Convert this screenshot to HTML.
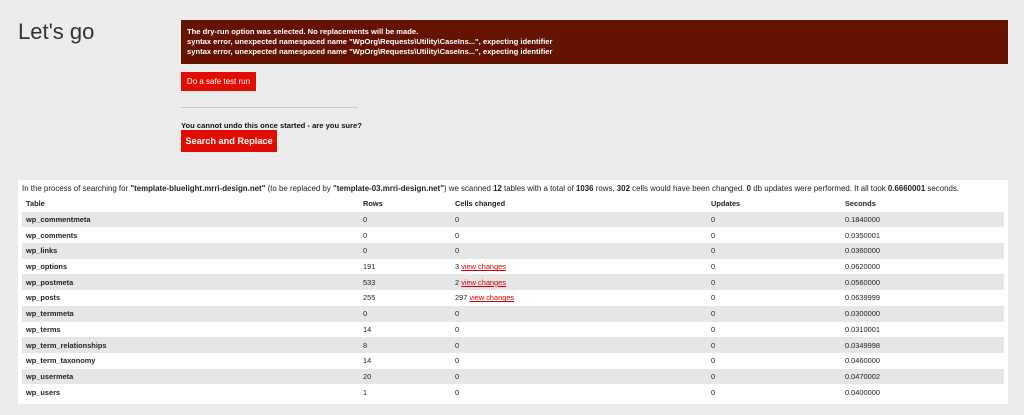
<!DOCTYPE html><html><head><style>
body{margin:0;width:1024px;height:415px;background:#ececec;font-family:"Liberation Sans",sans-serif;position:relative;overflow:hidden}
.a{position:absolute}
h1{position:absolute;left:18px;top:19px;margin:0;font-weight:normal;font-size:22px;color:#333}
.err{left:181px;top:20px;width:827px;height:44px;background:#641300;color:#fff;font-size:7.6px;font-weight:bold;line-height:10px;padding:7px 0 0 6px;box-sizing:border-box}
.b1{left:181px;top:72px;width:75px;height:19px;background:#e00d00;color:#fff;font-size:8px;line-height:19px;text-align:center}
.hr{left:181px;top:107px;width:177px;height:1px;background:#c8c8c8}
.q{left:181px;top:121px;font-size:7.6px;font-weight:bold;color:#111}
.b2{left:181px;top:130px;width:96px;height:22px;background:#e00d00;color:#fff;font-size:9.2px;font-weight:bold;line-height:22px;text-align:center}
.p{left:18px;top:180px;width:990px;height:224px;background:#fff}
.intro{left:22px;top:184px;font-size:7.9px;color:#222;white-space:nowrap}
table{position:absolute;left:22px;top:196px;width:982px;border-collapse:collapse;font-size:7.4px;color:#222}
td,th{height:15.7px;padding:0 0 0 4px;text-align:left}
th{font-weight:bold}
td:first-child{font-weight:bold}
tr:nth-child(even) td{background:#e6e6e6}
a{color:#d00;text-decoration:underline}
</style></head><body>
<h1>Let's go</h1>
<div class="a err">The dry-run option was selected. No replacements will be made.<br>syntax error, unexpected namespaced name "WpOrg\Requests\Utility\CaseIns...", expecting identifier<br>syntax error, unexpected namespaced name "WpOrg\Requests\Utility\CaseIns...", expecting identifier</div>
<div class="a b1">Do a safe test run</div>
<div class="a hr"></div>
<div class="a q">You cannot undo this once started - are you sure?</div>
<div class="a b2">Search and Replace</div>
<div class="a p"></div>
<div class="a intro">In the process of searching for <b>"template-bluelight.mrri-design.net"</b> (to be replaced by <b>"template-03.mrri-design.net"</b>) we scanned <b>12</b> tables with a total of <b>1036</b> rows, <b>302</b> cells would have been changed. <b>0</b> db updates were performed. It all took <b>0.6660001</b> seconds.</div>
<table>
<colgroup><col style="width:337px"><col style="width:92px"><col style="width:256px"><col style="width:134px"><col></colgroup>
<tr><th>Table</th><th>Rows</th><th>Cells changed</th><th>Updates</th><th>Seconds</th></tr>
<tr><td>wp_commentmeta</td><td>0</td><td>0</td><td>0</td><td>0.1840000</td></tr>
<tr><td>wp_comments</td><td>0</td><td>0</td><td>0</td><td>0.0350001</td></tr>
<tr><td>wp_links</td><td>0</td><td>0</td><td>0</td><td>0.0360000</td></tr>
<tr><td>wp_options</td><td>191</td><td>3 <a>view changes</a></td><td>0</td><td>0.0620000</td></tr>
<tr><td>wp_postmeta</td><td>533</td><td>2 <a>view changes</a></td><td>0</td><td>0.0560000</td></tr>
<tr><td>wp_posts</td><td>255</td><td>297 <a>view changes</a></td><td>0</td><td>0.0639999</td></tr>
<tr><td>wp_termmeta</td><td>0</td><td>0</td><td>0</td><td>0.0300000</td></tr>
<tr><td>wp_terms</td><td>14</td><td>0</td><td>0</td><td>0.0310001</td></tr>
<tr><td>wp_term_relationships</td><td>8</td><td>0</td><td>0</td><td>0.0349998</td></tr>
<tr><td>wp_term_taxonomy</td><td>14</td><td>0</td><td>0</td><td>0.0460000</td></tr>
<tr><td>wp_usermeta</td><td>20</td><td>0</td><td>0</td><td>0.0470002</td></tr>
<tr><td>wp_users</td><td>1</td><td>0</td><td>0</td><td>0.0400000</td></tr>
</table>
</body></html>
